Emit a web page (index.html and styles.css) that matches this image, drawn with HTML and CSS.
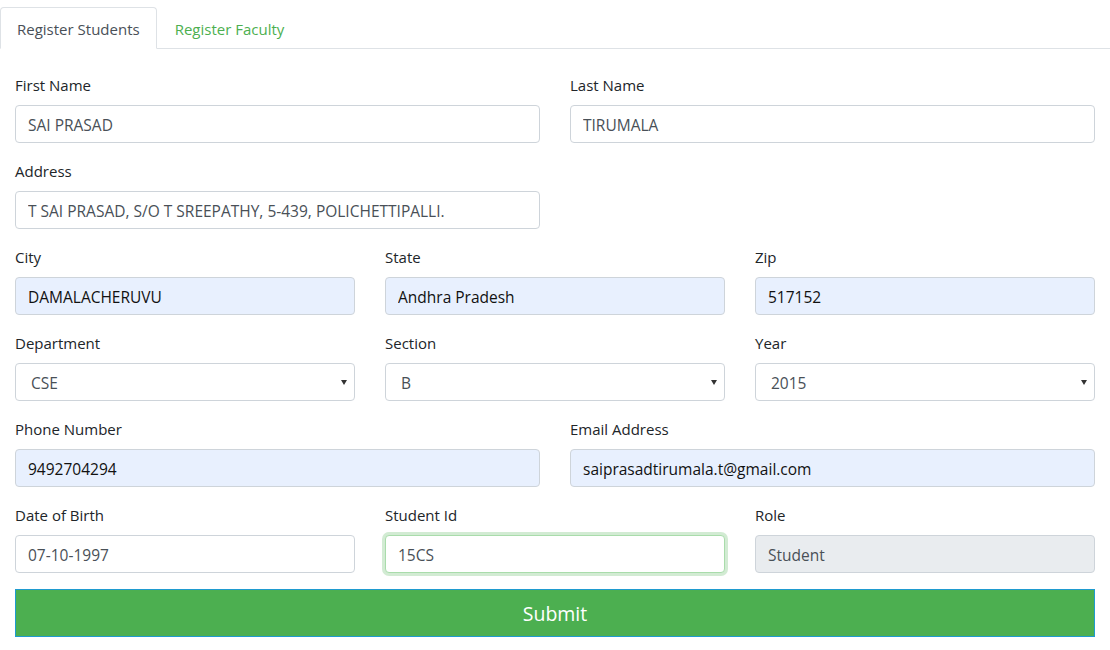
FILE: index.html
```html
<!DOCTYPE html>
<html lang="en">
<head>
<meta charset="utf-8">
<title>Register</title>
<link rel="stylesheet" href="styles.css">
</head>
<body>
<div class="page">
  <ul class="tabs">
    <li class="tab active">Register Students</li>
    <li class="tab link">Register Faculty</li>
  </ul>
  <form class="form">
    <div class="row two">
      <div class="group"><label>First Name</label><input class="ctl" value="SAI PRASAD"></div>
      <div class="group"><label>Last Name</label><input class="ctl" value="TIRUMALA"></div>
    </div>
    <div class="row two">
      <div class="group"><label>Address</label><input class="ctl" value="T SAI PRASAD, S/O T SREEPATHY, 5-439, POLICHETTIPALLI."></div>
    </div>
    <div class="row three">
      <div class="group"><label>City</label><input class="ctl auto" value="DAMALACHERUVU"></div>
      <div class="group"><label>State</label><input class="ctl auto" value="Andhra Pradesh"></div>
      <div class="group"><label>Zip</label><input class="ctl auto" value="517152"></div>
    </div>
    <div class="row three">
      <div class="group"><label>Department</label><div class="sel"><select class="ctl"><option>CSE</option></select></div></div>
      <div class="group"><label>Section</label><div class="sel"><select class="ctl"><option>B</option></select></div></div>
      <div class="group"><label>Year</label><div class="sel"><select class="ctl"><option>2015</option></select></div></div>
    </div>
    <div class="row two">
      <div class="group"><label>Phone Number</label><input class="ctl auto" value="9492704294"></div>
      <div class="group"><label>Email Address</label><input class="ctl auto" value="saiprasadtirumala.t@gmail.com"></div>
    </div>
    <div class="row three">
      <div class="group"><label>Date of Birth</label><input class="ctl" value="07-10-1997"></div>
      <div class="group"><label>Student Id</label><input class="ctl focus" value="15CS"></div>
      <div class="group"><label>Role</label><input class="ctl disabled" value="Student" disabled></div>
    </div>
    <button type="button" class="submit">Submit</button>
  </form>
</div>
</body>
</html>
```

FILE: styles.css
```css
* { box-sizing: border-box; }
body {
  margin: 0;
  background: #fff;
  font-family: "Open Sans", "Noto Sans", sans-serif;
  font-size: 15px;
  line-height: 24px;
  color: #212529;
}
.page { width: 1110px; }
.tabs {
  list-style: none;
  margin: 7px 0 0 0;
  padding: 0;
  display: flex;
  border-bottom: 1px solid #dee2e6;
}
.tab {
  padding: 9px 16px 7px;
  border: 1px solid transparent;
  border-radius: 4px 4px 0 0;
  margin-bottom: -1px;
}
.tab.active {
  color: #495057;
  background: #fff;
  border-color: #dee2e6 #dee2e6 #fff;
}
.tab.link { color: #4caf50; padding-left: 17px; }
.form { margin-top: 24px; padding: 0 15px; }
.row { display: grid; column-gap: 30px; }
.row.two { grid-template-columns: 1fr 1fr; }
.row.three { grid-template-columns: 1fr 1fr 1fr; }
.group { margin-bottom: 16px; }
label { display: block; margin-bottom: 8px; padding-top: 1px; line-height: 23px; }
.ctl {
  display: block;
  width: 100%;
  height: 38px;
  padding: 7px 12px 5px;
  font-family: inherit;
  font-size: 15.5px;
  line-height: 24px;
  color: #495057;
  background: #fff;
  border: 1px solid #ced4da;
  border-radius: 4px;
  outline: none;
}
.ctl.auto { background: #e8f0fe; color: #111; }
.ctl.focus {
  border-color: #a9dcab;
  box-shadow: 0 0 0 3px rgba(76, 175, 80, 0.25);
}
.ctl.disabled { background: #e9ecef; opacity: 1; color: #495057; }
.sel { position: relative; }
select.ctl {
  -webkit-appearance: none;
  appearance: none;
  padding-left: 15px;
}
.sel::after {
  content: "";
  position: absolute;
  right: 8px;
  top: 17px;
  border-left: 3.5px solid transparent;
  border-right: 3.5px solid transparent;
  border-top: 5px solid #333;
  pointer-events: none;
}
.submit {
  display: block;
  width: 100%;
  height: 48px;
  padding: 9px 16px 7px;
  font-family: inherit;
  font-size: 19.5px;
  line-height: 30px;
  color: #fff;
  background: #4caf50;
  border: 1px solid #1f9bcf;
  border-radius: 0;
}
```
